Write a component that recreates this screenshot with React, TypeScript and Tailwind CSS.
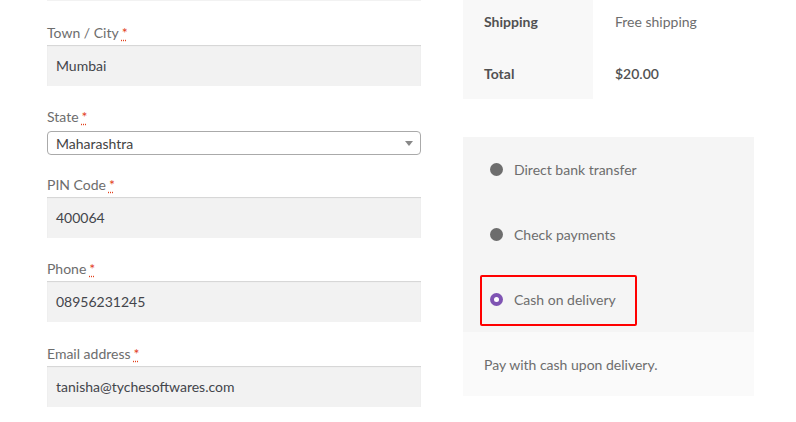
import React from "react";

const font = { fontFamily: "Lato, 'Noto Sans', sans-serif" };

function Req() {
  return (
    <abbr
      title="required"
      className="ml-[3px] text-[#e2401c] [text-decoration-line:underline] [text-decoration-style:dotted] [text-underline-offset:2px]"
    >
      *
    </abbr>
  );
}

function Field({ label, value, tight }: { label: string; value: string; tight?: boolean }) {
  return (
    <div className={tight ? "mt-[19px]" : "mt-[20px]"}>
      <label className="block h-[24px] leading-[24px] text-[14px] text-[#6d6d6d]">
        {label}
        <Req />
      </label>
      <div className="h-[41px] bg-[#f2f2f2] shadow-[inset_0_1px_1px_rgba(0,0,0,0.125)] px-[9px] flex items-center text-[14px] text-[#43454b]">
        {value}
      </div>
    </div>
  );
}

function Radio({ checked }: { checked?: boolean }) {
  if (checked) {
    return (
      <span className="w-[13px] h-[13px] rounded-full bg-[#7f54b3] flex items-center justify-center">
        <span className="w-[5px] h-[5px] rounded-full bg-white" />
      </span>
    );
  }
  return <span className="w-[13px] h-[13px] rounded-full bg-[#6d6d6d]" />;
}

const methods = [
  { name: "Direct bank transfer" },
  { name: "Check payments" },
  { name: "Cash on delivery", checked: true },
];

export default function App() {
  return (
    <div className="w-[796px] h-[422px] bg-white overflow-hidden" style={font}>
      <div className="flex pl-[47px] gap-[42px]">
        {/* billing form */}
        <div className="w-[374px]">
          <div className="h-[1px] bg-[#f2f2f2]" />
          <Field label="Town / City" value="Mumbai" />
          <div className="mt-[19px]">
            <label className="block h-[24px] leading-[24px] text-[14px] text-[#6d6d6d]">
              State
              <Req />
            </label>
            <div className="mt-[2px] h-[24px] border border-[#aaa] rounded-[4px] bg-white flex items-center justify-between pl-[8px] pr-[7px] text-[14px] text-[#444]">
              <span>Maharashtra</span>
              <svg width="8" height="5" viewBox="0 0 8 5">
                <path d="M0 0h8L4 5z" fill="#888" />
              </svg>
            </div>
          </div>
          <div className="mt-[-2px]">
            <Field label="PIN Code" value="400064" />
          </div>
          <Field label="Phone" value="08956231245" tight />
          <Field label="Email address" value="tanisha@tychesoftwares.com" />
        </div>

        {/* order review */}
        <div className="w-[291px]">
          <div className="mt-[-5px] text-[14px]">
            <div className="flex h-[52px]">
              <div className="w-[130px] bg-[#f8f8f8] pl-[21px] flex items-center font-bold text-[#515151]">
                Shipping
              </div>
              <div className="pl-[22px] flex items-center text-[#6d6d6d]">Free shipping</div>
            </div>
            <div className="flex h-[52px]">
              <div className="w-[130px] bg-[#f8f8f8] pl-[21px] flex items-center font-bold text-[#515151]">
                Total
              </div>
              <div className="pl-[22px] flex items-center font-semibold text-[#515151]">$20.00</div>
            </div>
          </div>

          <div className="mt-[38px]">
            <ul className="bg-[#f5f5f5]">
              {methods.map((m) => (
                <li key={m.name} className="relative h-[65px] flex items-center pl-[27px] gap-[11px] text-[14px] text-[#6d6d6d]">
                  <Radio checked={m.checked} />
                  <span>{m.name}</span>
                  {m.checked && (
                    <span className="absolute left-[17px] top-[8px] w-[157px] h-[51px] border-2 border-[#ff0000] rounded-[2px]" />
                  )}
                </li>
              ))}
            </ul>
            <div className="h-[64px] bg-[#fafafa] pl-[21px] flex items-center text-[14px] text-[#6d6d6d]">
              Pay with cash upon delivery.
            </div>
          </div>
        </div>
      </div>
    </div>
  );
}
